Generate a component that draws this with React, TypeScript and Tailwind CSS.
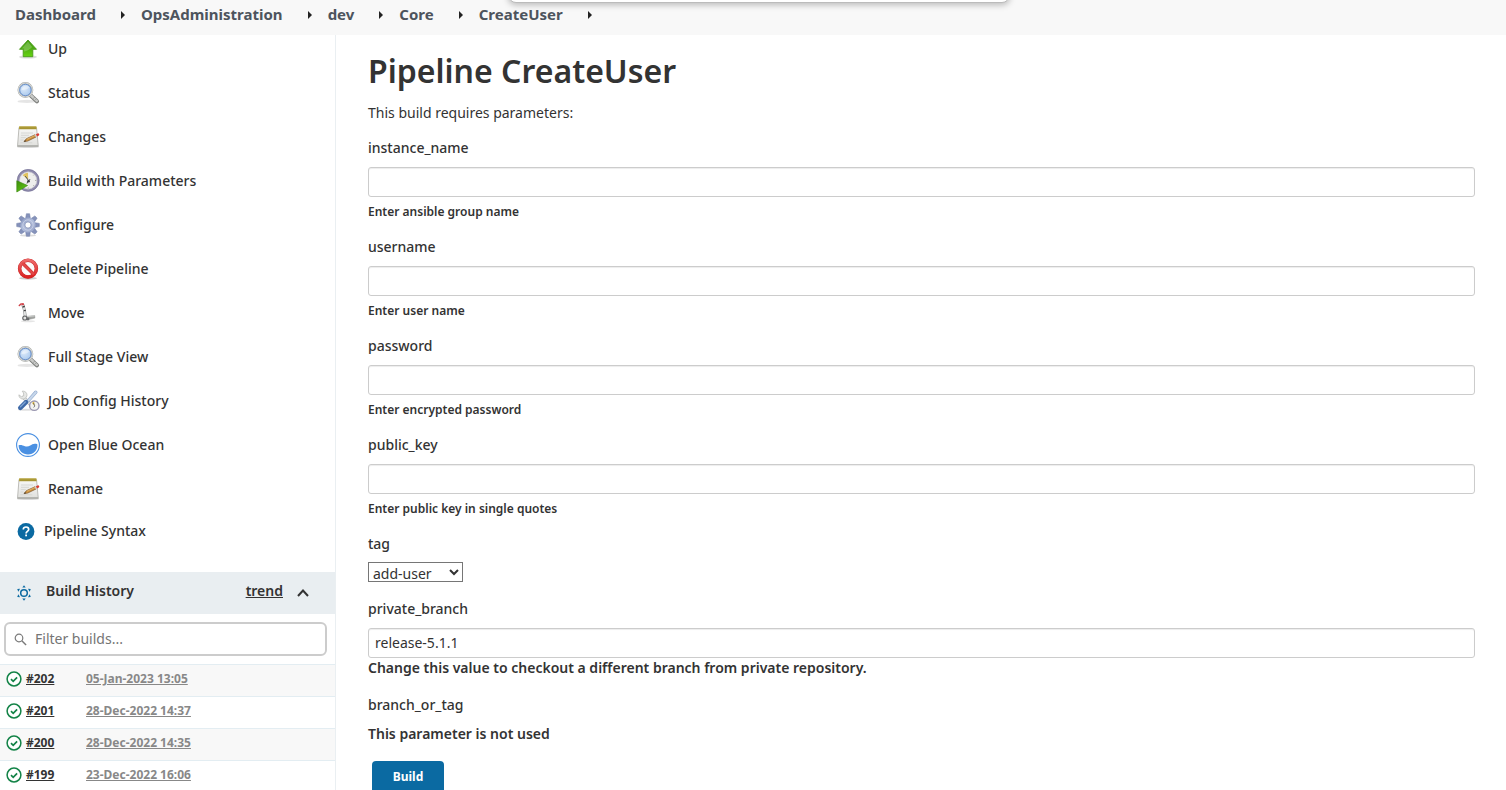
import React, { useId } from "react";

function UpIcon() {
  return (
    <svg viewBox="0 0 24 24" className="size-6 shrink-0" aria-hidden="true">
      <defs>
        <linearGradient id="up-fill" x1="0" y1="0" x2="0" y2="1">
          <stop offset="0" stopColor="#3f9a0c" />
          <stop offset="0.5" stopColor="#4fae12" />
          <stop offset="1" stopColor="#66d411" />
        </linearGradient>
      </defs>
      <ellipse cx="12" cy="20" rx="9" ry="1.6" fill="#000" opacity="0.14" />
      <path d="M12 3 20.5 12.3h-3.7v7.4H7.2v-7.4H3.5z" fill="url(#up-fill)" stroke="#4a9a1c" strokeWidth="0.9" strokeLinejoin="round" />
      <path d="M12 4.4 5.8 11.4h2.3v3.2c3-.4 5.6-2 8-4.6z" fill="#fff" opacity="0.22" />
    </svg>
  );
}

function MagnifierIcon() {
  const id = useId();
  return (
    <svg viewBox="0 0 24 24" className="size-6 shrink-0" aria-hidden="true">
      <defs>
        <radialGradient id={id} cx="0.4" cy="0.4" r="0.7">
          <stop offset="0" stopColor="#dceafa" />
          <stop offset="1" stopColor="#9dc0ea" />
        </radialGradient>
      </defs>
      <ellipse cx="11" cy="20.4" rx="9.5" ry="1.7" fill="#000" opacity="0.1" />
      <path d="m14.2 14 6.7 6.3" stroke="#7d7f7c" strokeWidth="4.2" strokeLinecap="round" />
      <path d="m14.5 14 6.3 5.9" stroke="#c9cac8" strokeWidth="2.4" strokeLinecap="round" />
      <path d="m17.3 17.7 1.5-1.8M19 19.3l1.6-1.8" stroke="#8b8d8a" strokeWidth="0.7" />
      <circle cx="9.4" cy="9" r="7" fill={`url(#${id})`} stroke="#a9aba8" strokeWidth="1.8" />
      <circle cx="9.4" cy="9" r="7" fill="none" stroke="#e6e7e5" strokeWidth="0.8" />
      <circle cx="9.4" cy="9" r="5.7" fill="none" stroke="#6d93cd" strokeWidth="1" />
      <path d="M5.4 9c.3-2.5 2-4.2 4.7-4.3 1.5 0 2.7.6 3.3 1.6-1.5 1.900-4.500 3-8 2.700z" fill="#fff" opacity="0.4" />
    </svg>
  );
}

function NotepadIcon() {
  const id = useId();
  return (
    <svg viewBox="0 0 24 24" className="size-6 shrink-0" aria-hidden="true">
      <defs>
        <linearGradient id={id} x1="0" y1="0" x2="0" y2="1">
          <stop offset="0" stopColor="#f8f8f7" />
          <stop offset="1" stopColor="#e0e0dd" />
        </linearGradient>
      </defs>
      <ellipse cx="12" cy="22" rx="11" ry="1" fill="#000" opacity="0.15" />
      <path d="M3 2.500h17.500L22.300 21.500H1.500z" fill={`url(#${id})`} stroke="#b5b6b1" strokeWidth="0.9" strokeLinejoin="round" />
      <path d="M1.700 20.800h20.400" stroke="#a9aaa5" strokeWidth="1.2" />
      <path d="M3.200 1.200h17.200l.3 3H2.900z" fill="#b3a13a" />
      <path d="M4.500 3.200h15.500" stroke="#877826" strokeWidth="0.9" strokeDasharray="1 1" />
      <path d="M5 8h12M5 10.300h8M4.800 12.600h5M4.500 15h3M4.300 17.800h12" stroke="#d4d5d1" strokeWidth="0.9" />
      <path d="m8 16.600 2.400-2.900 8.700-4 1.100 2.200-8.600 4.200z" fill="#cf9440" stroke="#7c5526" strokeWidth="0.7" strokeLinejoin="round" />
      <path d="m11 14.200 8-3.800" stroke="#e9bd74" strokeWidth="0.7" />
      <path d="m18.600 9.900 1.400-.7 1.200 2.300-1.400.7z" fill="#cfcfcd" />
      <path d="m19.900 9.200 1.700-.8c1.300-.5 2.300 1.500 1.200 2.200l-1.700.9z" fill="#d93a31" />
      <path d="m8 16.600 1.100-1.400 1 1z" fill="#2c2c2c" />
    </svg>
  );
}

function BuildClockIcon() {
  return (
    <svg viewBox="0 0 24 24" className="size-6 shrink-0" aria-hidden="true">
      <defs>
        <linearGradient id="run-fill" x1="0" y1="0" x2="1" y2="1">
          <stop offset="0" stopColor="#3c8c0c" />
          <stop offset="1" stopColor="#67d016" />
        </linearGradient>
      </defs>
      <circle cx="12.2" cy="11.4" r="9.9" fill="#eeeeec" stroke="#8f8bac" strokeWidth="2.3" />
      <circle cx="12.2" cy="11.4" r="11" fill="none" stroke="#6b678e" strokeWidth="0.5" />
      <circle cx="12.2" cy="11.4" r="8.6" fill="none" stroke="#c9c8d2" strokeWidth="0.6" />
      <path d="M12.2 10.600 6.700 6.300c1.300-1.500 2.900-2.300 5.300-2.500z" fill="#e0c260" />
      <path d="m9.300 7.200 3 4-1.300 3.300M12.800 11.800l1.200-1.600" stroke="#4a4c50" strokeWidth="1" fill="none" />
      <circle cx="12.600" cy="12.200" r="1.200" fill="#3c3e42" />
      <path d="M19.300 11.400h1M17.500 6.300l.6-.6M17.500 16.500l.6.6M12.200 18.500v1" stroke="#8b8d88" strokeWidth="1" />
      <path d="M.8 11.800 11.500 16.500.8 23z" fill="url(#run-fill)" stroke="#3e8d14" strokeWidth="0.7" strokeLinejoin="round" />
    </svg>
  );
}

const gearTeeth = [0, 45, 90, 135, 180, 225, 270, 315];

function GearIcon() {
  return (
    <svg viewBox="0 0 24 24" className="size-6 shrink-0" aria-hidden="true">
      <defs>
        <linearGradient id="gear-fill" gradientUnits="userSpaceOnUse" x1="3" y1="1" x2="20" y2="22">
          <stop offset="0" stopColor="#7484b2" />
          <stop offset="0.5" stopColor="#b3bfdc" />
          <stop offset="1" stopColor="#919cc2" />
        </linearGradient>
      </defs>
      <ellipse cx="12" cy="22.5" rx="8" ry="1" fill="#000" opacity="0.14" />
      {gearTeeth.map((angle) => (
        <path key={angle} d="M9.500 6 10.400.7h3.200L14.500 6z" fill="#8592ba" stroke="#6f7ca6" strokeWidth="0.5" strokeLinejoin="round" transform={`rotate(${angle} 12 12)`} />
      ))}
      <circle cx="12" cy="12" r="7.6" fill="url(#gear-fill)" />
      <circle cx="12" cy="12" r="5.2" fill="none" stroke="#c8d0e6" strokeWidth="0.9" />
      <circle cx="12" cy="12" r="3.1" fill="#fff" stroke="#7c88b0" strokeWidth="0.7" />
    </svg>
  );
}

function ProhibitedIcon() {
  return (
    <svg viewBox="0 0 24 24" className="size-6 shrink-0" aria-hidden="true">
      <defs>
        <linearGradient id="stop-fill" x1="0" y1="0" x2="0" y2="1">
          <stop offset="0" stopColor="#ee6a6a" />
          <stop offset="1" stopColor="#da2222" />
        </linearGradient>
      </defs>
      <ellipse cx="12" cy="21.3" rx="9" ry="1.5" fill="#000" opacity="0.2" />
      <circle cx="12" cy="11.6" r="8.400" fill="#fbfbfb" stroke="#c42626" strokeWidth="3.500" />
      <path d="m6.200 5.800 11.600 11.600" stroke="#c62a2a" strokeWidth="3.400" />
      <circle cx="12" cy="11.600" r="8.400" fill="none" stroke="url(#stop-fill)" strokeWidth="2.800" />
      <path d="m6.200 5.800 11.600 11.600" stroke="#e34747" strokeWidth="2.500" />
    </svg>
  );
}

function HandTruckIcon() {
  return (
    <svg viewBox="0 0 24 24" className="size-6 shrink-0" aria-hidden="true">
      <ellipse cx="12" cy="20.300" rx="7" ry="1" fill="#000" opacity="0.1" />
      <path d="M5.700 3.800 7.600 9.500l.7 7M7.800 3.200l1.500 5.600 1.200 7.400" stroke="#8b8d8e" strokeWidth="0.900" fill="none" />
      <path d="m6.800 3.600 1.700 5.600.9 7" stroke="#e6e7e6" strokeWidth="1.400" fill="none" />
      <path d="m6.600 6 2.200-.6M7.800 9.700l2-.4" stroke="#3e4041" strokeWidth="1.300" />
      <path d="M3.300 4.500 5 2.900h2.200" stroke="#cf4248" strokeWidth="1.500" fill="none" strokeLinecap="round" />
      <path d="M7 2.400v1.800" stroke="#d0373e" strokeWidth="1.500" />
      <path d="m9.700 15.500 9-1 .2 2.600-8.300 1.800z" fill="#a2a4a1" stroke="#7f817e" strokeWidth="0.400" />
      <path d="m10.200 15.800 8.300-.9" stroke="#dcdddb" strokeWidth="0.800" />
      <circle cx="8.800" cy="17" r="2.600" fill="#5f6163" />
      <circle cx="8.800" cy="17" r="1.500" fill="#e4e5e4" />
      <circle cx="12" cy="18" r="1.400" fill="#66686a" />
    </svg>
  );
}

function ToolsIcon() {
  return (
    <svg viewBox="0 0 24 24" className="size-6 shrink-0" aria-hidden="true">
      <ellipse cx="10" cy="20.8" rx="8" ry="1" fill="#000" opacity="0.12" />
      <path d="M7.500 8.500 17 18" stroke="#b4b6b3" strokeWidth="3.600" strokeLinecap="round" />
      <path d="M7.500 8.500 17 18" stroke="#e6e7e5" strokeWidth="2.400" strokeLinecap="round" />
      <path d="M6.200 2.200c2.800-.5 5.200 1.700 4.700 4.600-.4 2.400-3 3.800-5.300 3-1.700-.6-2.800-2-2.700-4l2.500 1.900 2.300-1-.2-2.700z" fill="#e6e7e5" stroke="#b4b6b3" strokeWidth="0.700" strokeLinejoin="round" />
      <path d="m12.500 11.500 7.300-8.300" stroke="#91aacd" strokeWidth="3.400" strokeLinecap="round" />
      <path d="m12.500 11.500 7.300-8.300" stroke="#c6d6ea" strokeWidth="2.100" strokeLinecap="round" />
      <path d="M4.300 18.800 10 13.200" stroke="#3f6aa8" strokeWidth="4.600" strokeLinecap="round" />
      <path d="M4.500 17.800 9.300 13" stroke="#7fa4d4" strokeWidth="1.300" strokeLinecap="round" />
      <circle cx="18.300" cy="16.700" r="4.700" fill="#f3f3f1" stroke="#9a97b0" strokeWidth="1.400" />
      <path d="M18.300 16.700 16 14c.6-.8 1.400-1.100 2.300-1.200z" fill="#dcb748" />
      <path d="m17.500 14 1.300 3-1.200 1.500" stroke="#4c4d55" strokeWidth="0.700" fill="none" />
    </svg>
  );
}

function OceanIcon() {
  return (
    <svg viewBox="0 0 24 24" className="size-6 shrink-0" aria-hidden="true">
      <circle cx="12" cy="12" r="11.4" fill="#fff" stroke="#4a90e2" strokeWidth="1.1" />
      <path d="M2.600 12.200c2.400-.8 4.200.2 6.300 1 2 .8 3.600.4 5.300-.7 1.900-1.300 4-2.500 7.200-1.300.6 5.800-3.700 10.300-9.400 10.300-5.300 0-9.500-4-9.400-9.300z" fill="#4a90e2" />
    </svg>
  );
}

function HelpIcon() {
  return (
    <svg viewBox="0 0 20 20" className="size-5 shrink-0" aria-hidden="true">
      <circle cx="10" cy="10.500" r="8.400" fill="#0b6aa2" />
      <path d="M7.300 8.600c0-1.600 1.100-2.600 2.700-2.600s2.700 1 2.700 2.400c0 1.900-2.600 2.100-2.600 4" fill="none" stroke="#fff" strokeWidth="1.700" />
      <rect x="9.200" y="13.500" width="1.800" height="1.800" fill="#fff" />
    </svg>
  );
}

const sunTriangles = [0, 60, 120, 180, 240, 300];

function WeatherIcon() {
  return (
    <svg viewBox="0 0 16 16" className="size-4 shrink-0" aria-hidden="true">
      <circle cx="8" cy="8" r="3.3" fill="none" stroke="#0b6aa2" strokeWidth="1.5" />
      {sunTriangles.map((angle) => (
        <path key={angle} d="M8 .2 9.700 2.400H6.300z" fill="#0b6aa2" transform={`rotate(${angle} 8 8)`} />
      ))}
    </svg>
  );
}

function SuccessIcon() {
  return (
    <svg viewBox="0 0 16 16" className="size-4 shrink-0" aria-hidden="true">
      <circle cx="8" cy="8" r="6.9" fill="#fff" stroke="#138347" strokeWidth="1.5" />
      <path d="m5 8.200 2.200 2.100 3.900-4" fill="none" stroke="#138347" strokeWidth="1.700" />
    </svg>
  );
}

const crumbs = ["Dashboard", "OpsAdministration", "dev", "Core", "CreateUser"];

const tasks = [
  { label: "Up", Icon: UpIcon },
  { label: "Status", Icon: MagnifierIcon },
  { label: "Changes", Icon: NotepadIcon },
  { label: "Build with Parameters", Icon: BuildClockIcon },
  { label: "Configure", Icon: GearIcon },
  { label: "Delete Pipeline", Icon: ProhibitedIcon },
  { label: "Move", Icon: HandTruckIcon },
  { label: "Full Stage View", Icon: MagnifierIcon },
  { label: "Job Config History", Icon: ToolsIcon },
  { label: "Open Blue Ocean", Icon: OceanIcon },
  { label: "Rename", Icon: NotepadIcon },
];

const builds = [
  { id: "#202", date: "05-Jan-2023 13:05" },
  { id: "#201", date: "28-Dec-2022 14:37" },
  { id: "#200", date: "28-Dec-2022 14:35" },
  { id: "#199", date: "23-Dec-2022 16:06" },
];

const textParameters = [
  { name: "instance_name", hint: "Enter ansible group name" },
  { name: "username", hint: "Enter user name" },
  { name: "password", hint: "Enter encrypted password" },
  { name: "public_key", hint: "Enter public key in single quotes" },
];

function Breadcrumbs() {
  return (
    <nav aria-label="Breadcrumb" className="flex h-[35px] shrink-0 items-start bg-[#f8f8f8] px-[15px] pt-[3px]">
      <ol className="flex items-center">
        {crumbs.map((crumb) => (
          <li key={crumb} className="flex items-center">
            <a href="#" className="text-[15px] leading-[23px] font-bold text-[#4d545d]">{crumb}</a>
            <svg viewBox="0 0 4 8" className="mr-4 ml-[25px] h-2 w-1" aria-hidden="true">
              <path d="M0 0 4 4 0 8z" fill="#222" />
            </svg>
          </li>
        ))}
      </ol>
    </nav>
  );
}

function Sidebar() {
  return (
    <aside className="w-[336px] shrink-0 border-r border-[#eaeff2]">
      <ul className="flex flex-col gap-5 px-4 pt-0.5">
        {tasks.map(({ label, Icon }) => (
          <li key={label}>
            <a href="#" className="flex h-6 items-center gap-2 text-sm font-medium">
              <Icon />
              {label}
            </a>
          </li>
        ))}
      </ul>
      <a href="#" className="mt-[18px] flex h-6 items-center gap-2 px-4 text-sm font-medium">
        <HelpIcon />
        Pipeline Syntax
      </a>
      <section className="mt-[29px]">
        <header className="flex h-[42px] items-center bg-[#e9eef1] pr-[26px] pb-1 pl-4">
          <span className="pt-1"><WeatherIcon /></span>
          <h2 className="ml-3.5 flex-1 text-sm font-semibold">Build History</h2>
          <a href="#" className="text-sm font-semibold underline">trend</a>
          <button type="button" aria-label="Collapse build history" className="ml-3.5 pt-1">
            <svg viewBox="0 0 12 12" className="size-3" aria-hidden="true">
              <path d="m1 9 5-5.500L11 9" fill="none" stroke="#333" strokeWidth="2" />
            </svg>
          </button>
        </header>
        <div className="py-2 pr-2 pl-1">
          <label className="flex h-[34px] items-center gap-2 rounded-md border-2 border-[#ccc] px-2">
            <svg viewBox="0 0 13 13" className="size-[13px] shrink-0" aria-hidden="true">
              <circle cx="5" cy="5" r="3.8" fill="none" stroke="#7a7a7a" strokeWidth="1.2" />
              <path d="m7.800 7.800 4.300 4.300" stroke="#7a7a7a" strokeWidth="1.400" />
            </svg>
            <input type="text" placeholder="Filter builds..." aria-label="Filter builds" className="min-w-0 flex-1 text-sm outline-none placeholder:text-[#757575]" />
          </label>
        </div>
        <table className="w-full text-xs font-bold">
          <tbody>
            {builds.map((build) => (
              <tr key={build.id} className="h-8 border-t border-[#e3edf2] odd:bg-[#f8f8f8]">
                <td className="w-[86px] pb-1 pl-1.5">
                  <a href="#" className="flex items-center gap-1 underline">
                    <SuccessIcon />
                    {build.id}
                  </a>
                </td>
                <td className="pb-1">
                  <a href="#" className="text-[#888] underline">{build.date}</a>
                </td>
              </tr>
            ))}
          </tbody>
        </table>
      </section>
    </aside>
  );
}

const inputStyle =
  "mt-[9px] block h-[30px] w-full rounded-[3px] border border-[#ccc] px-1.5 pb-0.5 text-sm shadow-[inset_0_1px_1px_rgba(0,0,0,0.075)]";

function ParameterForm() {
  return (
    <main className="min-w-0 flex-1 pt-4 pr-[31px] pl-8">
      <h1 className="text-[32px] leading-10 font-semibold">Pipeline CreateUser</h1>
      <p className="mt-3 text-sm leading-5">This build requires parameters:</p>
      <form className="mt-[15px] flex flex-col gap-[17px]" onSubmit={(event) => event.preventDefault()}>
        {textParameters.map(({ name, hint }) => (
          <div key={name}>
            <label htmlFor={name} className="block text-sm leading-5 font-medium">{name}</label>
            <input id={name} type="text" className={inputStyle} />
            <p className="mt-1.5 text-xs leading-[17px] font-semibold">{hint}</p>
          </div>
        ))}
        <div>
          <label htmlFor="tag" className="block text-sm leading-5 font-medium">tag</label>
          <select id="tag" className="mt-2 block h-5 w-[95px] border border-[#767676] bg-white pb-0.5 text-sm leading-4">
            <option>add-user</option>
          </select>
        </div>
        <div>
          <label htmlFor="private_branch" className="block text-sm leading-5 font-medium">private_branch</label>
          <input id="private_branch" type="text" defaultValue="release-5.1.1" className={inputStyle} />
          <p className="text-sm leading-5 font-semibold">Change this value to checkout a different branch from private repository.</p>
        </div>
        <div>
          <p className="text-sm leading-5 font-medium">branch_or_tag</p>
          <p className="mt-[9px] text-sm leading-5 font-semibold">This parameter is not used</p>
        </div>
        <button type="submit" className="ml-1 h-8 w-[72px] rounded-[4px] bg-[#0b6aa2] text-xs font-bold text-white">Build</button>
      </form>
    </main>
  );
}

export default function App() {
  return (
    <div className="relative flex h-screen flex-col overflow-hidden bg-white font-['Noto_Sans',sans-serif] text-[#333]">
      <Breadcrumbs />
      <div className="absolute top-0 left-1/2 -mt-2 ml-[-245px] h-[11px] w-[502px] rounded-b-lg border border-[#bbb] bg-white shadow-[0_2px_6px_rgba(0,0,0,0.25)]" />
      <div className="flex min-h-0 flex-1">
        <Sidebar />
        <ParameterForm />
      </div>
    </div>
  );
}
